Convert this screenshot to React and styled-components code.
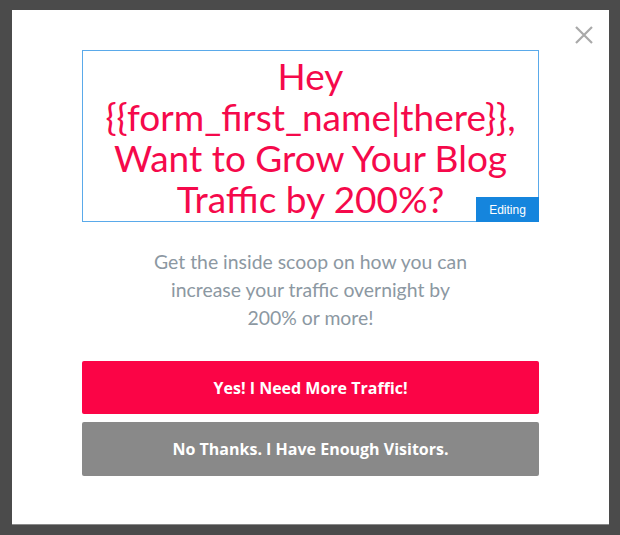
import React from 'react'
import styled, { createGlobalStyle } from 'styled-components'

const Global = createGlobalStyle`
  html, body {
    margin: 0;
    padding: 0;
    background: #4b4b4b;
  }
  body {
    width: 620px;
    height: 535px;
    overflow: hidden;
  }
`

const Page = styled.div`
  box-sizing: border-box;
  width: 620px;
  height: 535px;
  padding: 10px 11px 10px 12px;
`

const Modal = styled.div`
  position: relative;
  box-sizing: border-box;
  width: 597px;
  height: 515px;
  background: #fff;
  border-bottom: 1px solid #8a8a8a;
  padding: 40px 70px 0 70px;
  display: flex;
  flex-direction: column;
`

const Close = styled.button`
  position: absolute;
  top: 15px;
  right: 15px;
  width: 20px;
  height: 20px;
  padding: 0;
  border: 0;
  background: none;
  cursor: pointer;
  display: flex;
  align-items: center;
  justify-content: center;
`

const HeadlineBox = styled.div`
  position: relative;
  box-sizing: border-box;
  height: 172px;
  border: 1px solid #5aaaea;
  padding: 4px 0 0;
`

const Headline = styled.h1`
  margin: 0;
  font-family: "Lato", "Open Sans", sans-serif;
  font-weight: 400;
  font-size: 37px;
  line-height: 41px;
  color: #f5094b;
  text-align: center;
`

const Badge = styled.span`
  position: absolute;
  right: -1px;
  bottom: -1px;
  width: 63px;
  height: 25px;
  background: #1585dd;
  color: #fff;
  font-family: "Liberation Sans", Arial, sans-serif;
  font-size: 12px;
  display: flex;
  align-items: center;
  justify-content: center;
`

const Intro = styled.p`
  margin: 26px 0 0;
  font-family: "Lato", sans-serif;
  font-size: 19.4px;
  line-height: 28px;
  color: #8c98a2;
  text-align: center;
`

const Actions = styled.div`
  margin-top: 29px;
  display: flex;
  flex-direction: column;
  gap: 8px;
`

const Button = styled.button`
  height: ${p => p.$tall ? 54 : 53}px;
  border: 0;
  border-radius: 2px;
  background: ${p => p.$primary ? '#fb0446' : '#898989'};
  color: #fff;
  font-family: "Open Sans", sans-serif;
  font-weight: 700;
  font-size: 16px;
  cursor: pointer;
`

export default function App() {
  return (
    <Page>
      <Global />
      <Modal>
        <Close aria-label="close">
          <svg width="18" height="18" viewBox="0 0 18 18">
            <path d="M1 1L17 17M17 1L1 17" stroke="#a9a9a9" strokeWidth="2.2" />
          </svg>
        </Close>
        <HeadlineBox>
          <Headline>
            Hey<br />
            {'{{form_first_name|there}},'}<br />
            Want to Grow Your Blog<br />
            Traffic by 200%?
          </Headline>
          <Badge>Editing</Badge>
        </HeadlineBox>
        <Intro>
          Get the inside scoop on how you can<br />
          increase your traffic overnight by<br />
          200% or more!
        </Intro>
        <Actions>
          <Button $primary>Yes! I Need More Traffic!</Button>
          <Button $tall>No Thanks. I Have Enough Visitors.</Button>
        </Actions>
      </Modal>
    </Page>
  )
}
